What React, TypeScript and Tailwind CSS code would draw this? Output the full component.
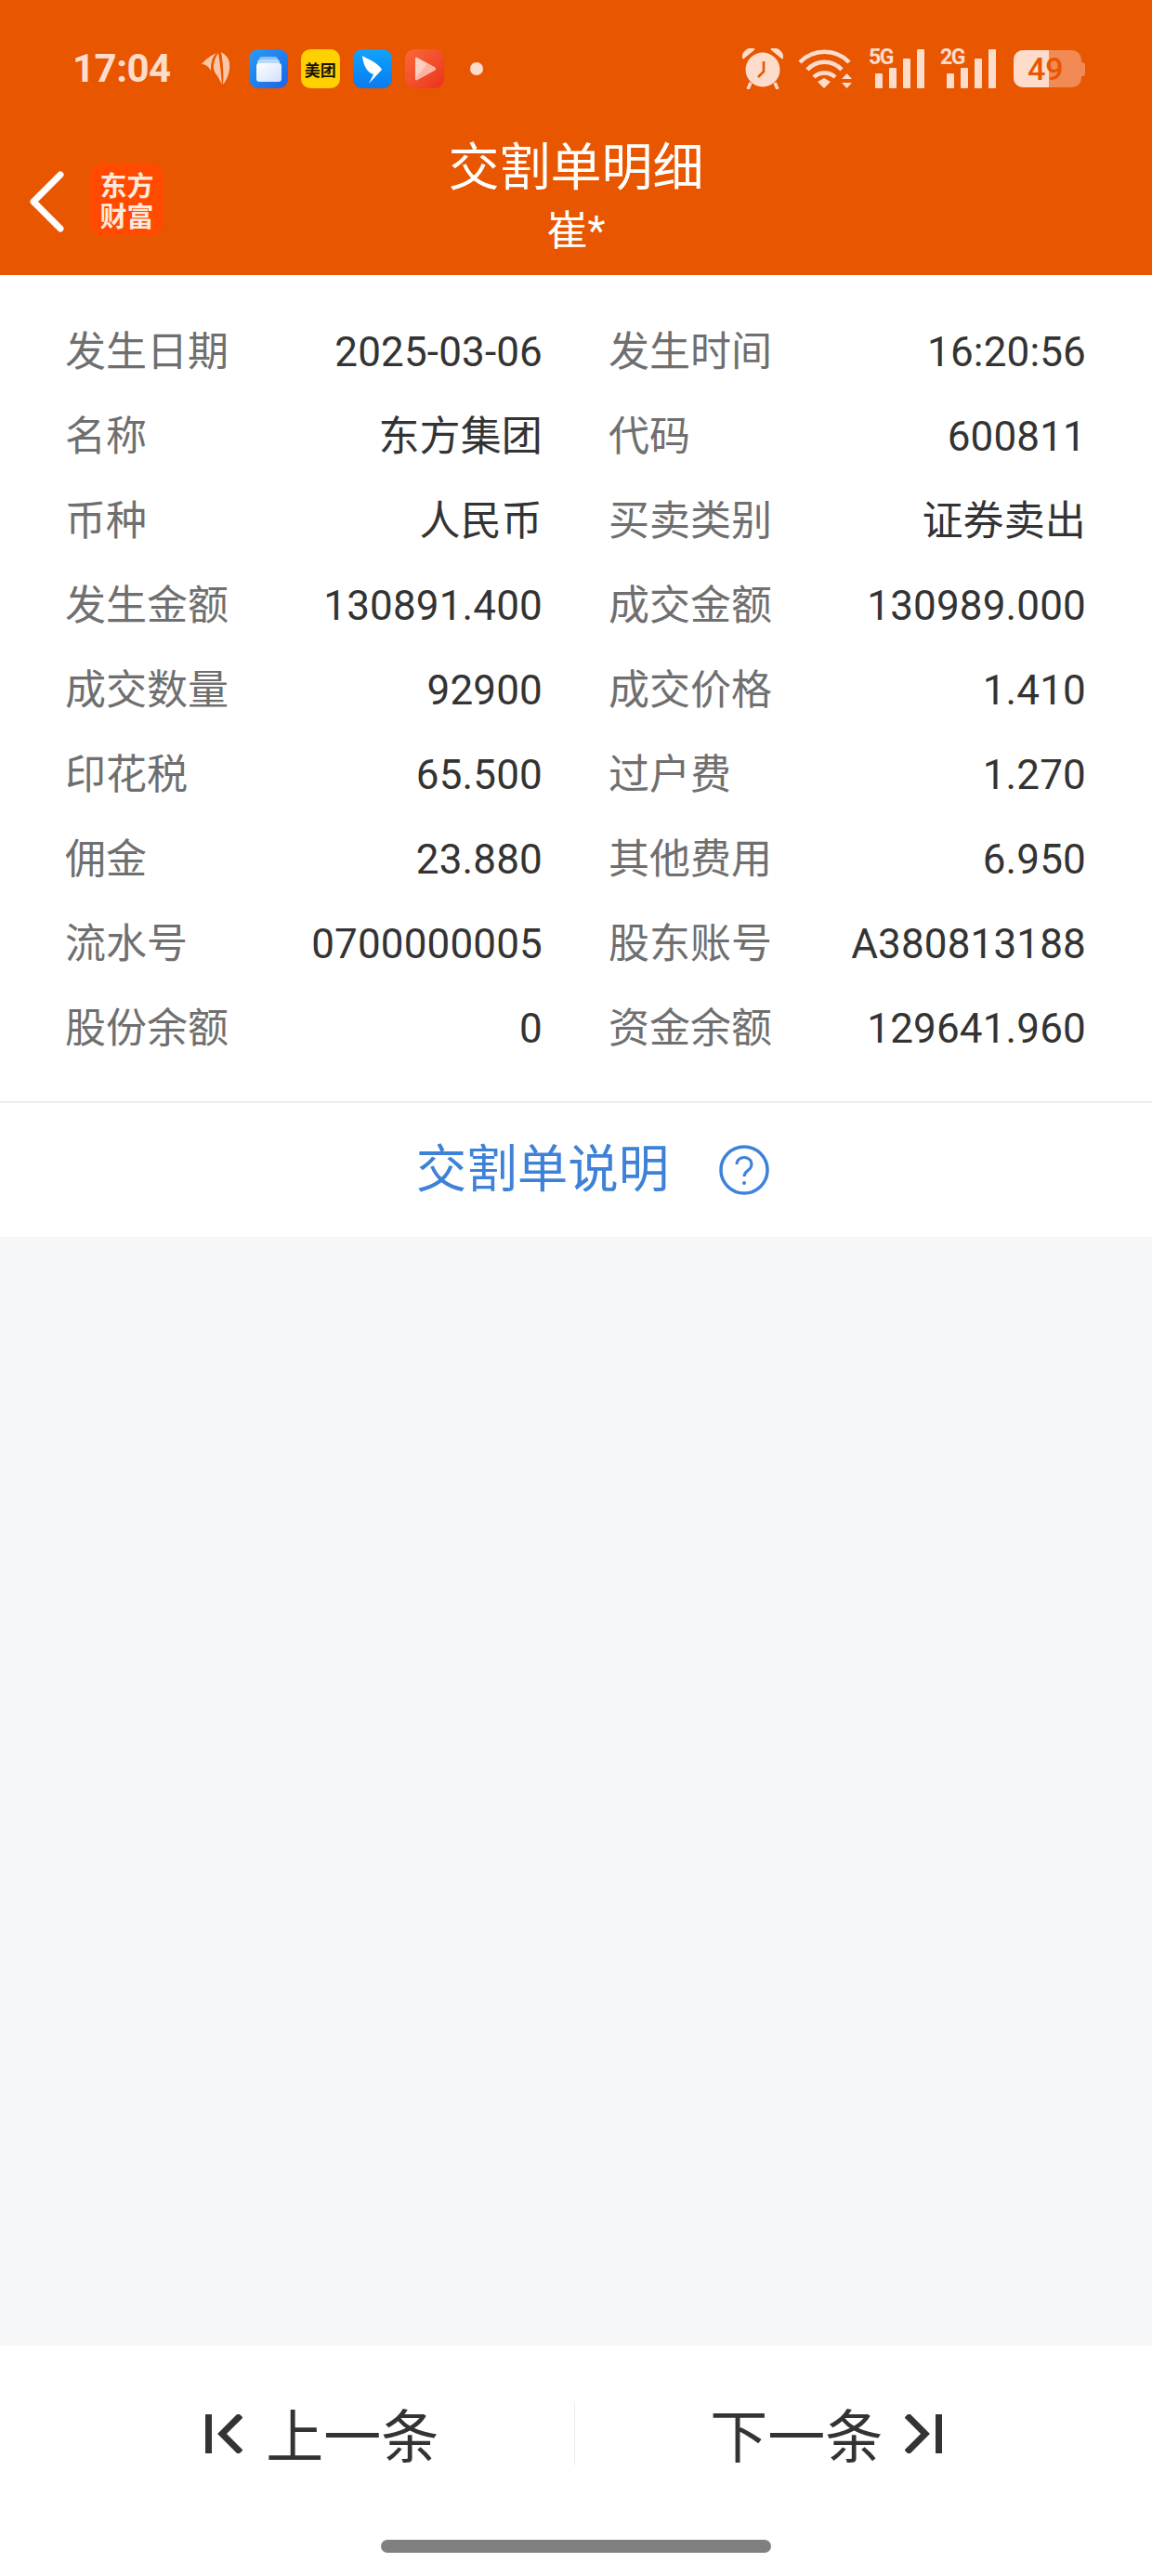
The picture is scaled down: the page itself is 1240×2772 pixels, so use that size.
const rows: [string, string, string, string][] = [
  ["发生日期", "2025-03-06", "发生时间", "16:20:56"],
  ["名称", "东方集团", "代码", "600811"],
  ["币种", "人民币", "买卖类别", "证券卖出"],
  ["发生金额", "130891.400", "成交金额", "130989.000"],
  ["成交数量", "92900", "成交价格", "1.410"],
  ["印花税", "65.500", "过户费", "1.270"],
  ["佣金", "23.880", "其他费用", "6.950"],
  ["流水号", "0700000005", "股东账号", "A380813188"],
  ["股份余额", "0", "资金余额", "129641.960"],
];

function SignalIcon({ label, className }: { label: string; className: string }) {
  return (
    <div className={"relative h-[42px] w-[59px] " + className}>
      <span className="absolute left-0 top-0 text-[23px] font-bold leading-[18px] tracking-[-1.5px] text-[#fddccb] font-['Roboto',sans-serif]">{label}</span>
      <div className="absolute bottom-0 left-[7px] flex items-end gap-[7px]">
        <div className="h-[16px] w-[8px] rounded-[1px] bg-[#fddccb]" />
        <div className="h-[22px] w-[8px] rounded-[1px] bg-[#fddccb]" />
        <div className="h-[32px] w-[8px] rounded-[1px] bg-[#fddccb]" />
        <div className="h-[42px] w-[8px] rounded-[1px] bg-[#fddccb]" />
      </div>
    </div>
  );
}

function StatusIcons() {
  return (
    <div className="flex items-center">
      <svg width="44" height="44" viewBox="0 0 44 44" fill="#fddccb">
        <path d="M1 10 C1 4 6 0 12 1 Z" stroke="#fddccb" strokeWidth="2.5" strokeLinejoin="round" />
        <path d="M43 10 C43 4 38 0 32 1 Z" stroke="#fddccb" strokeWidth="2.5" strokeLinejoin="round" />
        <circle cx="22" cy="23" r="18.5" />
        <path d="M9 37 L6 44 M35 37 L38 44" stroke="#fddccb" strokeWidth="3.5" />
        <path d="M23 14 V25 L17 31" stroke="#e85600" strokeWidth="2.6" fill="none" />
      </svg>
      <svg width="60" height="42" viewBox="0 0 60 42" className="ml-[16px]" fill="none" stroke="#fddccb" strokeWidth="4.5">
        <path d="M2 14 C16 -1 41 -1 55 14" />
        <path d="M10 22 C20 11 37 11 47 22" />
        <path d="M17 30 C23 24 34 24 40 30" />
        <path d="M21 35 L28 31 L35 35 L28 42Z" fill="#fddccb" stroke="none" />
        <path d="M47 32 L52.5 26 L58 32Z M47 36 H58 L52.5 42Z" fill="#fddccb" stroke="none" />
      </svg>
      <SignalIcon label="5G" className="ml-[16px]" />
      <SignalIcon label="2G" className="ml-[18px]" />
      <div className="relative ml-[20px] flex h-[40px] w-[73px] items-center overflow-hidden rounded-[10px] bg-[#f18a55]">
        <div className="absolute left-0 top-0 h-full w-[38px] bg-[#fddccb]" />
        <span className="relative ml-[15px] text-[34px] font-medium leading-none text-[#e85600] font-['Roboto',sans-serif]">49</span>
      </div>
      <div className="h-[15px] w-[4px] rounded-r-[3px] bg-[#f18a55]" />
    </div>
  );
}

function AppIcons() {
  return (
    <div className="ml-[33px] flex items-center">
      <svg width="32" height="36" viewBox="0 0 32 36" fill="#fbc6a8">
        <path d="M0 13 C5 7 10 4 16 1 C11 6 10 12 10 20 C7 15 4 13 0 13Z" />
        <path d="M18 1 C13 8 11 17 15 23 C18 27 20 31 22 35 C21 24 20 12 18 1Z" />
        <path d="M21 0 C23 10 24 24 23 35 C29 28 32 16 29 8 C27 4 24 2 21 0Z" />
      </svg>
      <div className="relative ml-[19px] h-[42px] w-[42px] overflow-hidden rounded-[10px] bg-gradient-to-br from-[#2a9cf6] to-[#1f63e6]">
        <div className="absolute left-[11px] top-[8px] h-[3px] w-[20px] rounded-t-[3px] bg-[#8cc2f8]" />
        <div className="absolute left-[9px] top-[11px] h-[5px] w-[24px] rounded-t-[3px] bg-[#b9d9fb]" />
        <div className="absolute left-[8px] top-[15px] h-[20px] w-[27px] rounded-[3px] bg-gradient-to-br from-[#ffffff] to-[#cfe0fd]" />
      </div>
      <div className="ml-[14px] flex h-[42px] w-[42px] items-center justify-center rounded-[10px] bg-[#ffd100]">
        <span className="whitespace-nowrap text-[17px] font-bold leading-none text-[#1a1400] font-['Noto_Sans_CJK_SC',sans-serif]">美团</span>
      </div>
      <div className="ml-[14px] h-[42px] w-[42px] rounded-[10px] bg-gradient-to-b from-[#12a3fb] to-[#0b7bf0]">
        <svg width="42" height="42" viewBox="0 0 42 42">
          <path d="M10 7 C15 10 28 15 31 22 L17 37 L22 27 C15 25 11 17 10 7Z" fill="#fff" />
        </svg>
      </div>
      <div className="ml-[14px] flex h-[42px] w-[42px] items-center justify-center rounded-[10px] bg-gradient-to-br from-[#f8693a] to-[#ec2e1e]">
        <svg width="24" height="26" viewBox="0 0 24 26" className="ml-[2px]">
          <path d="M3 1 L22 11.5 Q24 13 22 14.5 L3 25 Q1 26 1 24 V2 Q1 0 3 1Z" fill="#fdcfc3" />
          <path d="M14 7 L22 11.5 Q24 13 22 14.5 L3 25 Q1 26 1 24 Z" fill="#fbb4a0" />
        </svg>
      </div>
      <div className="ml-[28px] h-[14px] w-[14px] rounded-full bg-[#fddccb]" />
    </div>
  );
}

function EastMoneyLogo() {
  return (
    <div className="ml-[28px] flex h-[78px] w-[79px] items-center justify-center rounded-[14px] bg-[#ff4a00]">
      <span className="w-[58px] text-center font-['Noto_Sans_CJK_SC',sans-serif] text-[29px] font-bold leading-[33px] text-[#ffe9dc]">东方财富</span>
    </div>
  );
}

export default function App() {
  return (
    <div className="flex h-[2772px] w-[1240px] flex-col bg-[#f6f7f9] font-['Roboto','Noto_Sans_CJK_SC',sans-serif]">
      <header className="h-[296px] bg-[#e85600]">
        <div className="flex h-[148px] items-center justify-between pl-[78px] pr-[72px]">
          <div className="flex items-center">
            <span className="text-[42px] font-bold leading-none tracking-[-0.5px] text-[#fddccb] font-['Roboto',sans-serif]">17:04</span>
            <AppIcons />
          </div>
          <StatusIcons />
        </div>
        <div className="relative flex h-[148px] items-start">
          <div className="flex items-center pl-[32px] pt-[28px]">
            <svg width="37" height="66" viewBox="0 0 37 66" className="mt-[3px]" fill="none" stroke="#fff" strokeWidth="7" strokeLinecap="round" strokeLinejoin="round">
              <path d="M33 4 L4 33 L33 62" />
            </svg>
            <EastMoneyLogo />
          </div>
          <div className="absolute left-0 right-0 top-[-3px] flex flex-col items-center text-white">
            <span className="text-[55px] leading-[70px]">交割单明细</span>
            <span className="mt-[6px] text-[44px] leading-[56px]">崔*</span>
          </div>
        </div>
      </header>
      <section className="bg-white">
        <div className="flex flex-col px-[70px] pb-[33px] pt-[37px]">
          {rows.map((r) => (
            <div key={r[0]} className="grid h-[91px] grid-cols-[514px_514px] items-center gap-x-[71px] text-[44px] leading-none">
              <div className="flex items-center justify-between">
                <span className="text-[#6f6f6f]">{r[0]}</span>
                <span className="tracking-[0.15px] text-[#333333]">{r[1]}</span>
              </div>
              <div className="flex items-center justify-between">
                <span className="text-[#6f6f6f]">{r[2]}</span>
                <span className="tracking-[0.15px] text-[#333333]">{r[3]}</span>
              </div>
            </div>
          ))}
        </div>
        <div className="flex h-[146px] items-center justify-center border-t-2 border-[#eeeeee] pl-[36px] text-[54.5px] text-[#3e82d8]">
          <span>交割单说明</span>
          <svg width="54" height="54" viewBox="0 0 54 54" fill="none" stroke="#3e82d8" className="ml-[54px]">
            <circle cx="27" cy="27" r="25" strokeWidth="3.5" />
            <path d="M19 21 C19 11 35 11 35 21 C35 28 27 27 27 34" strokeWidth="3" />
            <circle cx="27" cy="41" r="2" fill="#3e82d8" stroke="none" />
          </svg>
        </div>
      </section>
      <div className="flex-1" />
      <footer className="flex h-[248px] flex-col bg-white">
        <div className="mt-[60px] flex h-[69px] items-center">
          <div className="flex flex-1 items-center justify-center pl-[76px] text-[#333333]">
            <svg width="40" height="42" viewBox="0 0 40 42" fill="none" stroke="#333" strokeWidth="7">
              <path d="M3.5 0 V42" />
              <path d="M38 1 L18 21 L38 41" />
            </svg>
            <span className="ml-[25px] mt-[10px] text-[62px] leading-none">上一条</span>
          </div>
          <div className="h-[69px] w-px bg-[#eeeeee]" />
          <div className="flex flex-1 items-center justify-center pr-[80px] text-[#333333]">
            <span className="mr-[24px] mt-[10px] text-[62px] leading-none">下一条</span>
            <svg width="40" height="42" viewBox="0 0 40 42" fill="none" stroke="#333" strokeWidth="7">
              <path d="M36.5 0 V42" />
              <path d="M2 1 L22 21 L2 41" />
            </svg>
          </div>
        </div>
        <div className="mx-auto mt-[80px] h-[14px] w-[420px] rounded-full bg-[#808080]" />
      </footer>
    </div>
  );
}
